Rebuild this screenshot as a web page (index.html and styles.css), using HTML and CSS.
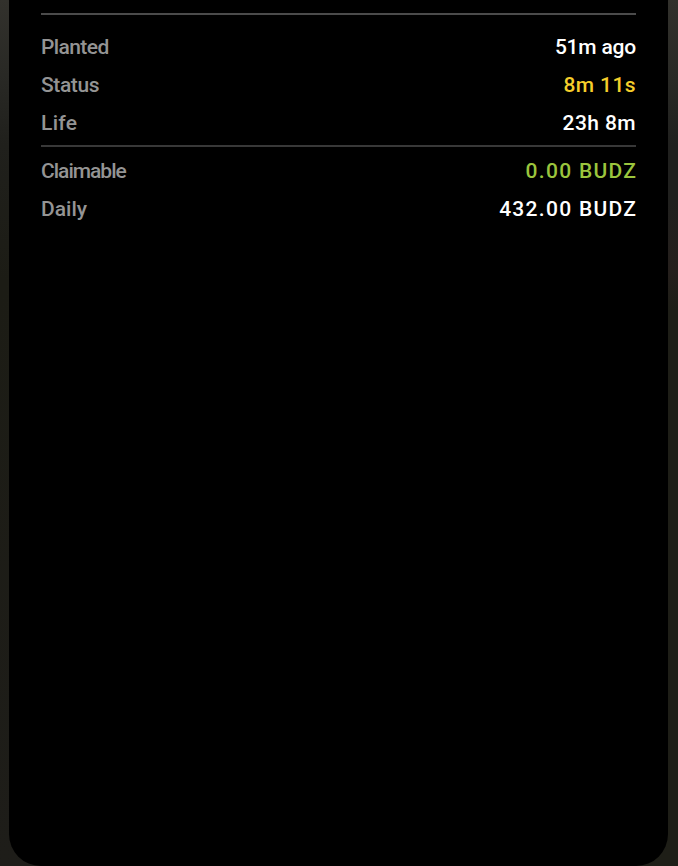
FILE: index.html
```html
<!DOCTYPE html>
<html lang="en">
<head>
    <meta charset="UTF-8">
    <meta name="viewport" content="width=device-width, initial-scale=1.0">
    <title>Plant Details</title>
    <link rel="stylesheet" href="styles.css">
</head>
<body>
    <main class="card">
        <section class="stats">
            <div class="row">
                <span class="label planted">Planted</span>
                <span class="value age">51m ago</span>
            </div>
            <div class="row">
                <span class="label status">Status</span>
                <span class="value timer">8m 11s</span>
            </div>
            <div class="row">
                <span class="label life">Life</span>
                <span class="value remaining">23h 8m</span>
            </div>
        </section>
        <section class="stats rewards">
            <div class="row">
                <span class="label claimable">Claimable</span>
                <span class="value claim">0.00 BUDZ</span>
            </div>
            <div class="row">
                <span class="label daily">Daily</span>
                <span class="value rate">432.00 BUDZ</span>
            </div>
        </section>
    </main>
</body>
</html>
```
FILE: styles.css
```css
body {
    margin: 0;
    height: 866px;
    overflow: hidden;
    font-family: Roboto, "Liberation Sans", sans-serif;
    font-size: 21px;
    font-weight: 500;
    color: #ffffff;
    background:
        linear-gradient(#32312c, #292925 80px, #20201e 145px, #20201e 200px, #251f1c 270px, #1e1e17 310px, #1e1e17) right / 50% 100% no-repeat,
        linear-gradient(#32312c, #292925 75px, #20201c 145px, #1c1c15 280px, #1e1d19) left / 50% 100% no-repeat;
}
.card {
    box-sizing: border-box;
    height: 866px;
    margin: 0 10px 0 9px;
    padding: 13px 32px 0;
    background-color: #000000;
    border-radius: 0 0 32px 32px;
}
.stats {
    border-top: 2px solid #4b4b4b;
    padding-top: 13px;
}
.rewards {
    border-top-color: #383838;
    margin-top: 3px;
    padding-top: 5px;
}
.row {
    display: flex;
    justify-content: space-between;
    align-items: center;
    height: 38px;
    white-space: nowrap;
}
.label {
    color: #949494;
}
.planted {
    letter-spacing: -0.6px;
}
.status {
    letter-spacing: -0.4px;
}
.life {
    letter-spacing: 0.3px;
}
.claimable {
    letter-spacing: -1px;
}
.age {
    letter-spacing: -0.2px;
}
.timer {
    color: #f5ce2b;
    letter-spacing: 0.4px;
}
.remaining {
    letter-spacing: 0.4px;
}
.claim {
    color: #9bc53d;
}
.claim, .rate {
    letter-spacing: 1.3px;
    margin-right: -1.3px;
}
```
